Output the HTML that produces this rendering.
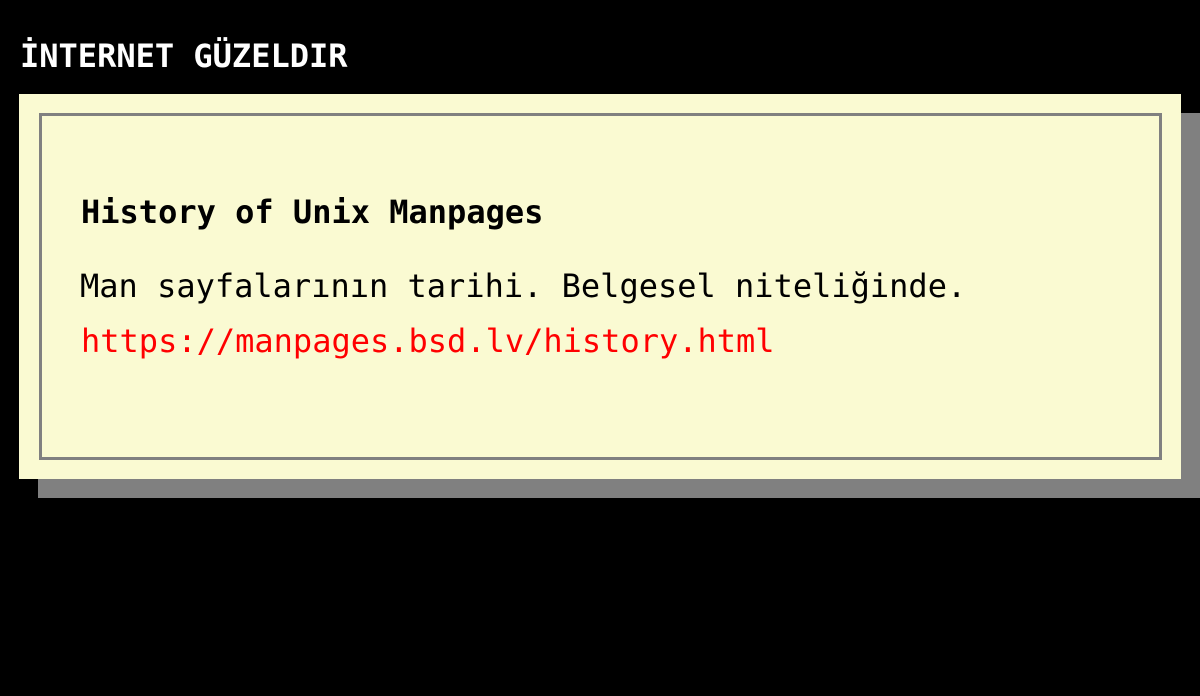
<!DOCTYPE html>
<html><head><meta charset="utf-8"><style>
html,body{margin:0;padding:0;background:#000;width:1200px;height:696px;overflow:hidden;font-family:"DejaVu Sans Mono","Liberation Mono",monospace;}
.t{position:absolute;left:20px;top:34px;color:#fff;font-weight:bold;font-size:32px;line-height:44px;white-space:nowrap;}
.sh{position:absolute;left:38px;top:113px;width:1162px;height:385px;background:#808080;}
.box{position:absolute;left:19px;top:94px;width:1162px;height:385px;background:#fafad2;}
.in{position:absolute;left:20px;top:19px;width:1117px;height:341px;border:3px solid #808080;}
.h{position:absolute;left:39px;top:76px;font-weight:bold;font-size:32px;line-height:40px;white-space:nowrap;color:#000;}
.p{position:absolute;left:38px;top:150px;font-size:32px;line-height:40px;white-space:nowrap;color:#000;}
.u{position:absolute;left:39px;top:205px;font-size:32px;line-height:40px;white-space:nowrap;color:#f00;}
</style></head><body>
<div class="t">İNTERNET GÜZELDIR</div>
<div class="sh"></div>
<div class="box"><div class="in">
<div class="h">History of Unix Manpages</div>
<div class="p">Man sayfalarının tarihi. Belgesel niteliğinde.</div>
<div class="u">https://manpages.bsd.lv/history.html</div>
</div></div>
</body></html>
